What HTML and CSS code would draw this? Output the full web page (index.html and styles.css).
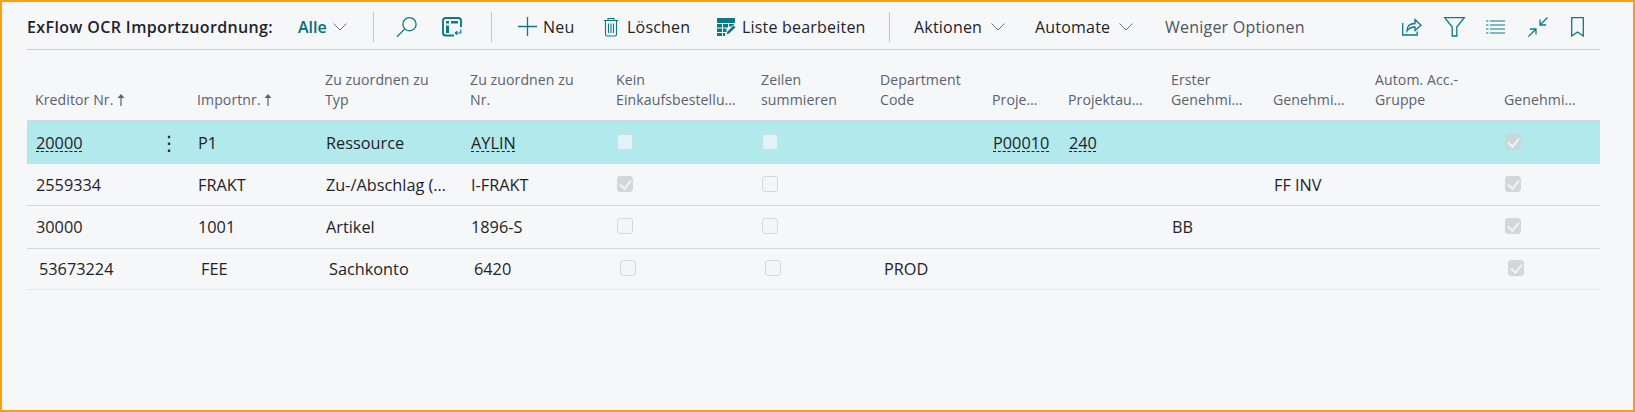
FILE: index.html
```html
<!DOCTYPE html>
<html lang="de">
<head>
<meta charset="utf-8">
<title>ExFlow OCR Importzuordnung</title>
<link rel="stylesheet" href="styles.css">
</head>
<body>
<main class="page">
  <header class="toolbar">
    <h1 class="title">ExFlow OCR Importzuordnung:</h1>
    <span class="view">Alle</span>
    <svg class="chev chev-view" viewBox="0 0 14 8"><path d="M.5.5 7 7 13.5.5"/></svg>
    <i class="sep sep-a"></i>
    <svg class="ico ico-search" viewBox="0 0 22 22"><circle cx="13.5" cy="8.2" r="6.6"/><path d="M8.8 12.9 1 20.8"/></svg>
    <svg class="ico ico-layout" viewBox="0 0 20 20"><path d="M12 18.5H3.5a2.5 2.5 0 0 1-2.5-2.5V3.500a2.500 2.500 0 0 1 2.500-2.500h13a2.500 2.500 0 0 1 2.500 2.500V10" stroke-width="1.900"/><path class="fill" d="M4 4h3v2.500H4zM9 4h7v2.500H9zM4 8.500h3V16H4z"/><path d="M18.800 12.500v3.500h-5M15.200 14.300 13.300 16l1.900 1.800" stroke-width="1.200"/></svg>
    <i class="sep sep-b"></i>
    <svg class="ico ico-plus" viewBox="0 0 19 19"><path d="M9.500 0v19M0 9.500h19"/></svg>
    <span class="act act-new">Neu</span>
    <svg class="ico ico-trash" viewBox="0 0 16 20"><path d="M1 3.500h14M5 3.500V1.500h6v2M2.500 3.500V17.500a1.500 1.500 0 0 0 1.500 1.500h8a1.500 1.500 0 0 0 1.500-1.500V3.500M5.500 6.500v9.500M8 6.500v9.500M10.500 6.500v9.500"/></svg>
    <span class="act act-del">Löschen</span>
    <svg class="ico ico-edit" viewBox="0 0 19 18"><path class="fill" d="M0 0h18v5H0zM0 6h5v3.500H0zM6 6h5v3.500H6zM12 6h5v2.500H12zM0 10.500h5V14H0zM6 10.500h3.500V14H6zM0 15h5v3H0zM6 15h2v3H6z"/><path class="pen" d="M9 17l1-3.500 6.500-6.500 2.300 2.300-6.500 6.500z"/></svg>
    <span class="act act-edit">Liste bearbeiten</span>
    <i class="sep sep-c"></i>
    <span class="act act-aktionen">Aktionen</span>
    <svg class="chev chev-a" viewBox="0 0 14 8"><path d="M.5.5 7 7 13.5.5"/></svg>
    <span class="act act-auto">Automate</span>
    <svg class="chev chev-b" viewBox="0 0 14 8"><path d="M.5.5 7 7 13.5.5"/></svg>
    <span class="act act-less">Weniger Optionen</span>
    <svg class="ico ico-share" viewBox="0 0 20 19"><path d="M.7 6v12h14.500v-3.500"/><path d="M5 14c0-5 3-7.500 8-7.500V2.500l6 5.700-6 5.300V10c-3.500 0-6 1-8 4z"/></svg>
    <svg class="ico ico-filter" viewBox="0 0 21 20"><path d="M.7.7h19.600L12.800 10v9H8.200v-9z"/></svg>
    <svg class="ico ico-list" viewBox="0 0 19 14"><path d="M0 1h2.500M4 1h15M0 5h2.500M4 5h15M0 9h2.500M4 9h15M0 13h2.500M4 13h15"/></svg>
    <svg class="ico ico-collapse" viewBox="0 0 20 20"><path d="M19.500.5 12 8M12 2.500V8h6M.5 19.500 8 12M2 12h6v5.500"/></svg>
    <svg class="ico ico-mark" viewBox="0 0 13 20"><path d="M.7.7h11.600v18.300L6.500 15 .7 19z"/></svg>
  </header>

  <section class="list">
    <div class="row head">
      <div class="th">Kreditor Nr. <svg class="arrow" viewBox="0 0 8 12"><path d="M4 12V3"/><path class="tip" d="M4 0 7.500 4h-7z"/></svg></div>
      <div class="th">Importnr. <svg class="arrow" viewBox="0 0 8 12"><path d="M4 12V3"/><path class="tip" d="M4 0 7.500 4h-7z"/></svg></div>
      <div class="th">Zu zuordnen zu<br>Typ</div>
      <div class="th">Zu zuordnen zu<br>Nr.</div>
      <div class="th">Kein<br>Einkaufsbestellu…</div>
      <div class="th">Zeilen<br>summieren</div>
      <div class="th">Department<br>Code</div>
      <div class="th">Proje…</div>
      <div class="th">Projektau…</div>
      <div class="th">Erster<br>Genehmi…</div>
      <div class="th">Genehmi…</div>
      <div class="th">Autom. Acc.-<br>Gruppe</div>
      <div class="th">Genehmi…</div>
    </div>

    <div class="row selected">
      <div class="td first"><a class="link">20000</a><span class="dots">⋮</span></div>
      <div class="td">P1</div>
      <div class="td">Ressource</div>
      <div class="td"><a class="link">AYLIN</a></div>
      <div class="td"><span class="box"></span></div>
      <div class="td"><span class="box"></span></div>
      <div class="td"></div>
      <div class="td"><a class="link">P00010</a></div>
      <div class="td"><a class="link">240</a></div>
      <div class="td"></div>
      <div class="td"></div>
      <div class="td"></div>
      <div class="td"><span class="box on"></span></div>
    </div>

    <div class="row">
      <div class="td first">2559334</div>
      <div class="td">FRAKT</div>
      <div class="td">Zu-/Abschlag (…</div>
      <div class="td">I-FRAKT</div>
      <div class="td"><span class="box on"></span></div>
      <div class="td"><span class="box"></span></div>
      <div class="td"></div>
      <div class="td"></div>
      <div class="td"></div>
      <div class="td"></div>
      <div class="td">FF INV</div>
      <div class="td"></div>
      <div class="td"><span class="box on"></span></div>
    </div>

    <div class="row tall">
      <div class="td first">30000</div>
      <div class="td">1001</div>
      <div class="td">Artikel</div>
      <div class="td">1896-S</div>
      <div class="td"><span class="box"></span></div>
      <div class="td"><span class="box"></span></div>
      <div class="td"></div>
      <div class="td"></div>
      <div class="td"></div>
      <div class="td">BB</div>
      <div class="td"></div>
      <div class="td"></div>
      <div class="td"><span class="box on"></span></div>
    </div>

    <div class="row last">
      <div class="td first">53673224</div>
      <div class="td">FEE</div>
      <div class="td">Sachkonto</div>
      <div class="td">6420</div>
      <div class="td"><span class="box"></span></div>
      <div class="td"><span class="box"></span></div>
      <div class="td">PROD</div>
      <div class="td"></div>
      <div class="td"></div>
      <div class="td"></div>
      <div class="td"></div>
      <div class="td"></div>
      <div class="td"><span class="box on"></span></div>
    </div>
  </section>
</main>
</body>
</html>
```
FILE: styles.css
```css
* { box-sizing: border-box; }
html, body { margin: 0; height: 100%; }
body {
  font-family: "Open Sans", "Noto Sans", sans-serif;
  color: #1f2328;
  background: #f6f7f9;
}
.page {
  width: 1635px;
  height: 412px;
  border: 2px solid #f5a30b;
  padding: 0 33px 0 25px;
  overflow: hidden;
}
.toolbar {
  display: flex;
  align-items: center;
  height: 48px;
  border-bottom: 1px solid #cdced1;
  padding-top: 2px;
  font-size: 16px;
  white-space: nowrap;
}
.title {
  margin: 0;
  width: 271px;
  font-size: 16px;
  font-weight: 600;
  letter-spacing: .37px;
}
.view { color: #00707a; font-weight: 600; width: 35px; }
.act { letter-spacing: .2px; }
.sep { display: block; width: 1px; height: 30px; background: #c4c5c8; }
.chev { display: block; width: 14px; height: 8px; fill: none; stroke: #6a7078; stroke-width: 1; overflow: visible; }
.ico { display: block; fill: none; stroke: #0b7a85; stroke-width: 1.300; overflow: visible; }
.ico .fill { fill: #0b7a85; stroke: none; }
.ico .pen { fill: #0b7a85; stroke: #f6f7f9; stroke-width: .8; }
.chev-view { margin-right: 26px; }
.ico-search { width: 22px; height: 22px; margin-left: 22px; }
.ico-layout { width: 20px; height: 20px; margin-left: 24px; stroke-width: 1.200; }
.sep-b { margin-left: 29px; }
.ico-plus { width: 19px; height: 19px; margin-left: 26px; }
.act-new { margin-left: 6px; width: 31px; }
.ico-trash { width: 16px; height: 20px; margin-left: 29px; stroke-width: 1.100; }
.act-del { margin-left: 8px; width: 63px; }
.ico-edit { width: 19px; height: 18px; margin-left: 27px; }
.act-edit { margin-left: 6px; width: 125px; }
.sep-c { margin-left: 22px; }
.act-aktionen { margin-left: 24px; width: 69px; }
.chev-a { margin-left: 8px; }
.act-auto { margin-left: 30px; width: 76px; }
.chev-b { margin-left: 8px; }
.act-less { margin-left: 32px; width: 141px; color: #4d5560; letter-spacing: .22px; }
.ico-share { width: 20px; height: 19px; margin-left: 96px; }
.ico-filter { width: 21px; height: 20px; margin-left: 22px; }
.ico-list { width: 19px; height: 14px; margin-left: 21px; stroke-width: 1; }
.ico-collapse { width: 20px; height: 20px; margin-left: 23px; }
.ico-mark { width: 13px; height: 20px; margin-left: 23px; }

.row {
  display: grid;
  grid-template-columns: 162px 128px 145px 146px 145px 119px 112px 76px 103px 102px 102px 129px 104px;
  width: 1573px;
  height: 42px;
  border-bottom: 1px solid #d4d6da;
  font-size: 16.300px;
}
.head {
  height: 72px;
  border-bottom: 2px solid #d4d6da;
  font-size: 14.100px;
  color: #5a626d;
  letter-spacing: .08px;
}
.tall { height: 43px; }
.selected { background: #b2e9ec; }
.last { height: 41px; margin-left: 1px; padding-left: 2px; border-bottom-color: #e2e4e7; }
.th {
  align-self: end;
  padding: 0 0 10px 8px;
  line-height: 20px;
  white-space: nowrap;
}
.arrow { width: 8px; height: 12px; vertical-align: -1px; fill: none; stroke: #5a626d; stroke-width: 1.200; }
.arrow .tip { fill: #5a626d; stroke: none; }
.td {
  display: flex;
  align-items: center;
  padding: 0 0 0 9px;
  white-space: nowrap;
}
.first { justify-content: space-between; }
.link { text-decoration: underline dashed; text-underline-offset: 2px; text-decoration-thickness: 1px; }
.dots { width: 16px; margin-right: 14px; font-size: 20px; text-align: center; line-height: 1; font-family: "DejaVu Sans", sans-serif; }
.box {
  display: block;
  width: 16px;
  height: 16px;
  margin: 0 0 2px 0;
  border: 1px solid #d6d8da;
  border-radius: 3px;
  background: #f4f5f6;
  position: relative;
}
.selected .box { background: #e2f3f5; border-color: #cfdfe1; }
.box.on { background: #d5d6d8; border-color: #d5d6d8; }
.selected .box.on { background: #c8d8da; border-color: #c8d8da; }
.box.on::after {
  content: "";
  position: absolute;
  left: 4px;
  top: 1px;
  width: 5px;
  height: 9px;
  border: solid #f2f3f4;
  border-width: 0 2px 2px 0;
  transform: rotate(40deg);
}
```
